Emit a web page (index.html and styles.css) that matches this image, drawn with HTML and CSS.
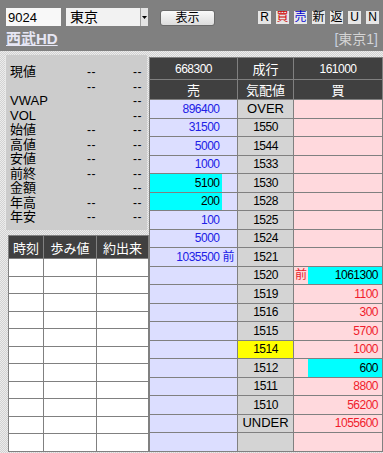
FILE: index.html
```html
<!DOCTYPE html>
<html lang="ja">
<head>
<meta charset="utf-8">
<link rel="stylesheet" href="styles.css">
</head>
<body>
<div class="hdr">
  <div class="row1">
    <div class="code">9024</div>
    <div class="sel"><span class="sel-txt">東京</span><span class="arrow"><svg width="5" height="3" viewBox="0 0 5 3"><path d="M0 0H5L2.5 3Z" fill="#000"/></svg></span></div>
    <div class="btn">表示</div>
    <div class="tools">
      <span class="tb">R</span><span class="tb red">買</span><span class="tb blue">売</span><span class="tb">新</span><span class="tb">返</span><span class="tb">U</span><span class="tb">N</span>
    </div>
  </div>
  <div class="row2">
    <a class="name">西武HD</a>
    <span class="mkt"><span class="br">[</span>東京1<span class="br">]</span></span>
  </div>
</div>
<div class="main">
  <div class="left">
    <div class="info">
      <span class="lbl big">現値</span><span class="v">--</span><span class="v">--</span>
      <span class="lbl"></span><span class="v">--</span><span class="v">--</span>
      <span class="lbl">VWAP</span><span class="v"></span><span class="v">--</span>
      <span class="lbl">VOL</span><span class="v"></span><span class="v">--</span>
      <span class="lbl">始値</span><span class="v">--</span><span class="v">--</span>
      <span class="lbl">高値</span><span class="v">--</span><span class="v">--</span>
      <span class="lbl">安値</span><span class="v">--</span><span class="v">--</span>
      <span class="lbl">前終</span><span class="v">--</span><span class="v">--</span>
      <span class="lbl">金額</span><span class="v"></span><span class="v">--</span>
      <span class="lbl">年高</span><span class="v">--</span><span class="v">--</span>
      <span class="lbl">年安</span><span class="v">--</span><span class="v">--</span>
    </div>
    <table class="ticks">
      <colgroup><col class="c1"><col class="c2"><col class="c3"></colgroup>
      <thead><tr><th>時刻</th><th>歩み値</th><th>約出来</th></tr></thead>
      <tbody>
        <tr><td></td><td></td><td></td></tr>
        <tr><td></td><td></td><td></td></tr>
        <tr><td></td><td></td><td></td></tr>
        <tr><td></td><td></td><td></td></tr>
        <tr><td></td><td></td><td></td></tr>
        <tr><td></td><td></td><td></td></tr>
        <tr><td></td><td></td><td></td></tr>
        <tr><td></td><td></td><td></td></tr>
        <tr><td></td><td></td><td></td></tr>
        <tr><td></td><td></td><td></td></tr>
        <tr><td></td><td></td><td></td></tr>
      </tbody>
    </table>
  </div>
  <table class="board">
    <colgroup><col class="sn"><col class="sm"><col class="pr"><col class="bm"><col class="bn"></colgroup>
    <thead>
      <tr class="h1"><th colspan="2" class="num">668300</th><th>成行</th><th colspan="2" class="num">161000</th></tr>
      <tr class="h2"><th colspan="2">売</th><th>気配値</th><th colspan="2">買</th></tr>
    </thead>
    <tbody>
      <tr><td class="s">896400</td><td class="smk"></td><td class="p">OVER</td><td class="bmk"></td><td class="b"></td></tr>
      <tr><td class="s">31500</td><td class="smk"></td><td class="p num">1550</td><td class="bmk"></td><td class="b"></td></tr>
      <tr><td class="s">5000</td><td class="smk"></td><td class="p num">1544</td><td class="bmk"></td><td class="b"></td></tr>
      <tr><td class="s">1000</td><td class="smk"></td><td class="p num">1533</td><td class="bmk"></td><td class="b"></td></tr>
      <tr><td class="s hl">5100</td><td class="smk"></td><td class="p num">1530</td><td class="bmk"></td><td class="b"></td></tr>
      <tr><td class="s hl">200</td><td class="smk"></td><td class="p num">1528</td><td class="bmk"></td><td class="b"></td></tr>
      <tr><td class="s">100</td><td class="smk"></td><td class="p num">1525</td><td class="bmk"></td><td class="b"></td></tr>
      <tr><td class="s">5000</td><td class="smk"></td><td class="p num">1524</td><td class="bmk"></td><td class="b"></td></tr>
      <tr><td class="s">1035500</td><td class="smk">前</td><td class="p num">1521</td><td class="bmk"></td><td class="b"></td></tr>
      <tr><td class="s"></td><td class="smk"></td><td class="p num">1520</td><td class="bmk">前</td><td class="b hl">1061300</td></tr>
      <tr><td class="s"></td><td class="smk"></td><td class="p num">1519</td><td class="bmk"></td><td class="b">1100</td></tr>
      <tr><td class="s"></td><td class="smk"></td><td class="p num">1516</td><td class="bmk"></td><td class="b">300</td></tr>
      <tr><td class="s"></td><td class="smk"></td><td class="p num">1515</td><td class="bmk"></td><td class="b">5700</td></tr>
      <tr><td class="s"></td><td class="smk"></td><td class="p num cur">1514</td><td class="bmk"></td><td class="b">1000</td></tr>
      <tr><td class="s"></td><td class="smk"></td><td class="p num">1512</td><td class="bmk"></td><td class="b hl">600</td></tr>
      <tr><td class="s"></td><td class="smk"></td><td class="p num">1511</td><td class="bmk"></td><td class="b">8800</td></tr>
      <tr><td class="s"></td><td class="smk"></td><td class="p num">1510</td><td class="bmk"></td><td class="b">56200</td></tr>
      <tr><td class="s"></td><td class="smk"></td><td class="p">UNDER</td><td class="bmk"></td><td class="b">1055600</td></tr>
      <tr><td class="s"></td><td class="smk"></td><td class="p"></td><td class="bmk"></td><td class="b"></td></tr>
    </tbody>
  </table>
</div>
</body>
</html>
```

FILE: styles.css
```css
html, body {
  margin: 0;
  padding: 0;
}
body {
  width: 383px;
  height: 453px;
  overflow: hidden;
  font-family: "Liberation Sans", "Noto Sans CJK JP", sans-serif;
  font-size: 12px;
  background-color: #ececec;
  background-image: conic-gradient(#d2d2d2 25%, transparent 0 50%, #d2d2d2 0 75%, transparent 0);
  background-size: 2px 2px;
}

/* header */
.hdr {
  height: 51px;
  background: #808080;
  box-sizing: border-box;
  padding: 8px 4px 0 6px;
}
.row1 {
  display: flex;
  align-items: flex-start;
  height: 18px;
}
.code {
  width: 55px;
  height: 18px;
  background: #f8f8f8;
  box-sizing: border-box;
  padding-left: 2px;
  font-size: 13px;
  line-height: 19px;
  color: #000;
}
.sel {
  margin-left: 5px;
  width: 82px;
  height: 18px;
  background: #f2f2f2;
  display: flex;
  justify-content: space-between;
  box-sizing: border-box;
}
.sel-txt {
  padding-left: 4px;
  font-size: 14px;
  line-height: 18px;
}
.arrow {
  width: 7px;
  height: 18px;
  background: #e4e4e4;
  border-left: 1px solid #a0a0a0;
  display: flex;
  align-items: center;
  justify-content: center;
}
.btn {
  margin-left: 12px;
  margin-top: 2px;
  width: 55px;
  height: 16px;
  box-sizing: border-box;
  border: 1px solid #6a6a6a;
  border-radius: 3px;
  background: linear-gradient(#fafafa, #dcdcdc);
  text-align: center;
  font-size: 12px;
  line-height: 14px;
}
.tools {
  margin-left: auto;
  margin-top: 3px;
  display: flex;
  gap: 5px;
}
.tb {
  width: 13px;
  height: 13px;
  background: #e6e6e6;
  text-align: center;
  font-size: 12px;
  line-height: 13px;
  color: #000;
}
.tb.red { color: #d00000; }
.tb.blue { color: #0000d0; }

.row2 {
  display: flex;
  justify-content: space-between;
  align-items: flex-end;
  margin-top: 4px;
}
.name {
  font-weight: bold;
  font-size: 15px;
  line-height: 18px;
  color: #e6e6f4;
  text-decoration: underline;
  text-underline-offset: 1px;
}
.mkt {
  font-size: 14px;
  line-height: 18px;
  color: #d4d4d4;
  margin-right: 1px;
}
.mkt .br { color: #c8d0e0; }

/* main */
.main {
  display: flex;
  padding: 4px 0 0 4px;
}
.left {
  width: 145px;
  display: flex;
  flex-direction: column;
}
.info {
  width: 142px;
  height: 175px;
  margin-left: 1px;
  box-sizing: border-box;
  background: #cccccc;
  border-left: 1px solid #e8e8e8;
  padding: 10px 5px 0 4px;
  display: grid;
  grid-template-columns: 1fr 40px 46px;
  grid-auto-rows: 14.5px;
  align-items: center;
  font-size: 13px;
  line-height: 14px;
}
.info .lbl { color: #000; }
.info .v {
  text-align: right;
  font-size: 12px;
  letter-spacing: 0.5px;
}

.ticks {
  margin: 5px 0 0 4px;
  width: 140px;
  border-collapse: collapse;
  table-layout: fixed;
}
.ticks .c1 { width: 35px; }
.ticks .c2 { width: 53px; }
.ticks .c3 { width: 52px; }
.ticks th {
  height: 22px;
  padding: 0;
  background: #404040;
  color: #fff;
  font-weight: normal;
  font-size: 13px;
  border: 1px solid #808080;
}
.ticks td {
  height: 17.5px;
  padding: 0;
  background: #fff;
  border: 1px solid #808080;
  box-sizing: border-box;
}

.board {
  margin-top: 2px;
  width: 233px;
  border-collapse: collapse;
  table-layout: fixed;
}
.board .sn { width: 72px; }
.board .sm { width: 16px; }
.board .pr { width: 56px; }
.board .bm { width: 14px; }
.board .bn { width: 75px; }
.board th {
  padding: 0;
  background: #404040;
  color: #fff;
  font-weight: normal;
  font-size: 13px;
  border: 1px solid #808080;
  text-align: center;
}
.board .h1 th { height: 21px; }
.board .h2 th { height: 19px; }
.num { letter-spacing: -0.5px; font-size: 12px !important; }
.board td {
  height: 18.5px;
  padding: 0;
  border: 1px solid #808080;
  box-sizing: border-box;
  line-height: 14px;
}
.board .s {
  background: #dcdeff;
  color: #2020e6;
  text-align: right;
  padding-right: 2px;
  border-right: none;
  letter-spacing: -0.5px;
}
.board .smk {
  background: #dcdeff;
  color: #2020e6;
  border-left: none;
  font-size: 12px;
  text-align: left;
  padding-left: 1px;
}
.board .p {
  background: #d4d4d4;
  color: #000;
  text-align: center;
  font-size: 13px;
}
.board .p.cur { background: #ffff00; }
.board .bmk {
  background: #ffd9dd;
  color: #e81c2c;
  border-right: none;
  font-size: 12px;
  padding-left: 1px;
}
.board .b {
  background: #ffd9dd;
  color: #f01c2c;
  text-align: right;
  padding-right: 4px;
  border-left: none;
  letter-spacing: -0.5px;
}
.board .hl {
  background: #00ffff;
  color: #000;
}
```
